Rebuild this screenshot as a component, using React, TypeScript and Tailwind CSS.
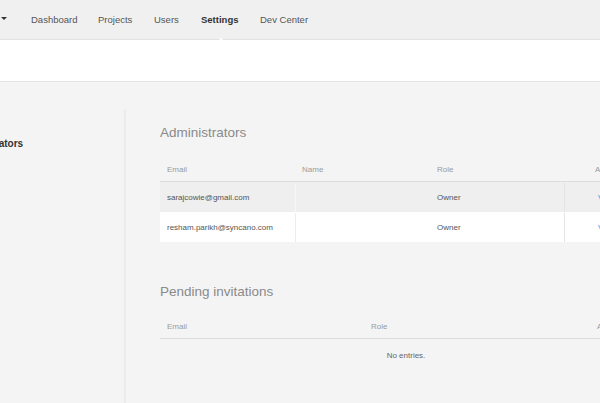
import { FC, ReactElement } from "react";
import clsx from "clsx";

const navItems = [
  { name: "Dashboard", width: "w-[67px]" },
  { name: "Projects", width: "w-[56px]" },
  { name: "Users", width: "w-[47px]" },
  { name: "Settings", width: "w-[59px]", active: true },
  { name: "Dev Center", width: "w-[80px]" },
];

const admins = [
  { email: "sarajcowie@gmail.com", role: "Owner" },
  { email: "resham.parikh@syncano.com", role: "Owner" },
];

const TopNav: FC = (): ReactElement => (
  <header className="relative flex h-[40px] items-center border-b border-[#e2e2e2] bg-[#f0f0f0]">
    <span className="ml-[1px] mt-[-2px] h-0 w-0 border-x-[3px] border-t-[3px] border-x-transparent border-t-[#333]" />
    <nav className="ml-[24px] flex items-center">
      {navItems.map((item) => (
        <span
          key={item.name}
          className={clsx(
            "relative shrink-0 text-[9.5px] leading-[40px]",
            item.width,
            item.active ? "font-bold text-[#333]" : "text-[#555]"
          )}
        >
          {item.name}
          {item.active && (
            <span className="absolute bottom-[-1px] left-[17px] h-0 w-0 border-x-[3px] border-b-[3px] border-x-transparent border-b-white" />
          )}
        </span>
      ))}
    </nav>
  </header>
);

const HeaderCell: FC<{ label: string; className?: string }> = ({ label, className }) => (
  <div className={clsx("text-[8px] text-[#9a9a9a]", className)}>{label}</div>
);

export default function App(): ReactElement {
  return (
    <div
      className="h-[403px] w-[600px] overflow-hidden bg-[#f4f4f4]"
      style={{ fontFamily: '"Liberation Sans", Arial, sans-serif' }}
    >
      <TopNav />
      <div className="h-[42px] border-b border-[#e4e4e4] bg-white" />

      <main className="flex pt-[27px]">
        {/* settings sidebar, scrolled off to the left */}
        <aside className="w-[124px] shrink-0 overflow-hidden">
          <div className="ml-[-48px] mt-[27px] whitespace-nowrap text-[10px] font-bold text-[#333]">
            Administrators
          </div>
        </aside>

        <section className="min-h-[300px] w-[492px] shrink-0 border-l-2 border-[#ebebeb] pl-[34px] pt-[16px]">
          <h2 className="text-[13.5px] leading-[16px] text-[#8a8a8a]">Administrators</h2>

          <div className="mt-[17px] w-[492px]">
            <div className="flex h-[24px] items-center border-b border-[#dcdcdc]">
              <HeaderCell label="Email" className="w-[135px] pl-[7px]" />
              <HeaderCell label="Name" className="w-[134px] pl-[7px]" />
              <HeaderCell label="Role" className="w-[135px] pl-[8px]" />
              <HeaderCell label="Actions" className="flex-1 text-center" />
            </div>
            {admins.map((a, idx) => (
              <div
                key={a.email}
                className={clsx(
                  "flex h-[30px] items-stretch pt-[1px] text-[8px] text-[#555]",
                  idx === 0 ? "bg-[#efefef]" : "bg-white"
                )}
              >
                <div className="flex w-[135px] items-center pl-[7px]">{a.email}</div>
                <div
                  className={clsx(
                    "w-[134px] border-l",
                    idx === 0 ? "border-[#f7f7f7]" : "border-[#ececec]"
                  )}
                />
                <div className="flex w-[135px] items-center pl-[8px]">{a.role}</div>
                <div className="flex flex-1 items-center border-l border-[#e4e4e4] pl-[33px] text-[#3b8ed8]">
                  View
                </div>
              </div>
            ))}
          </div>

          <h2 className="mt-[42px] text-[13.5px] leading-[16px] text-[#8a8a8a]">
            Pending invitations
          </h2>

          <div className="mt-[15px] w-[492px]">
            <div className="flex h-[24px] items-center border-b border-[#dcdcdc]">
              <HeaderCell label="Email" className="w-[204px] pl-[7px]" />
              <HeaderCell label="Role" className="w-[204px] pl-[7px]" />
              <HeaderCell label="Actions" className="flex-1 text-center" />
            </div>
            <div className="py-[11px] text-center text-[8px] text-[#666]">No entries.</div>
          </div>
        </section>
      </main>
    </div>
  );
}
